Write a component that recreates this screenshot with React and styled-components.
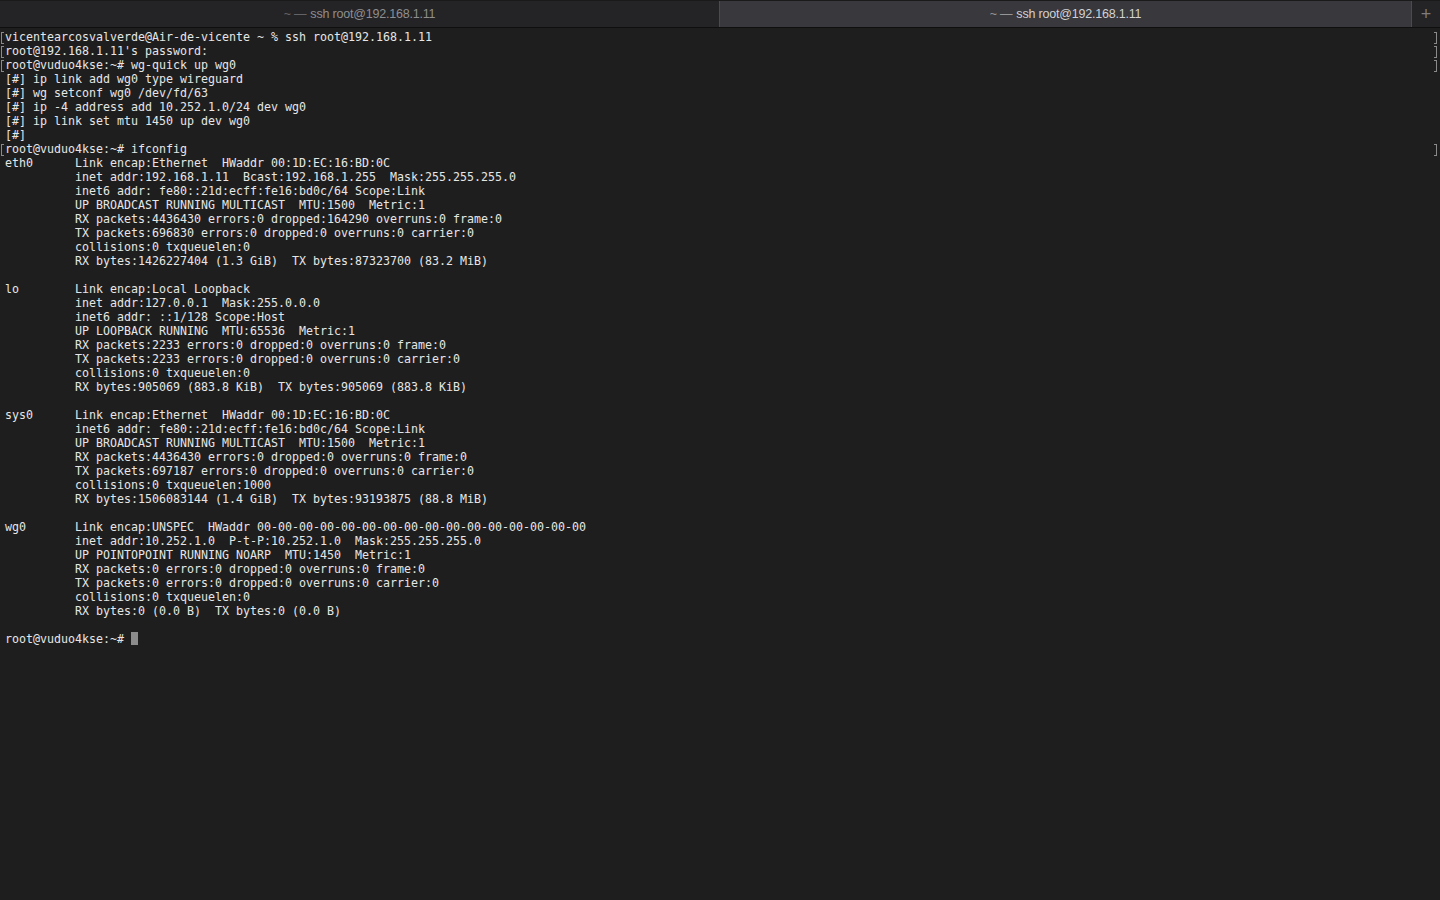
import React from 'react';
import styled, { createGlobalStyle } from 'styled-components';

const GlobalStyle = createGlobalStyle`
  html, body {
    margin: 0;
    padding: 0;
    background: #1e1e1e;
  }
  #root {
    height: 100vh;
  }
`;

const Window = styled.div`
  width: 1440px;
  height: 900px;
  display: flex;
  flex-direction: column;
  background: #1e1e1e;
  overflow: hidden;
`;

const TabBar = styled.div`
  display: flex;
  height: 28px;
  background: #242426;
  border-top: 1px solid #1a1a1a;
  border-bottom: 1px solid #0f0f0f;
  box-sizing: border-box;
`;

const Tab = styled.div`
  flex: ${(p) => (p.$active ? '1' : '0 0 719px')};
  display: flex;
  align-items: center;
  justify-content: center;
  background: ${(p) => (p.$active ? '#39383c' : '#242426')};
  color: ${(p) => (p.$active ? '#d2d2d4' : '#8e8e90')};
  border-left: ${(p) => (p.$active ? '1px solid #4b4b4e' : 'none')};
  font-family: 'Liberation Sans', Arial, sans-serif;
  font-size: 12.5px;
  letter-spacing: -0.2px;
`;

const Dim = styled.span`
  opacity: 0.6;
  margin-right: 4px;
`;

const AddTab = styled.div`
  width: 28px;
  display: flex;
  align-items: center;
  justify-content: center;
  border-left: 1px solid #4b4b4e;
  background: #242426;
  color: #7d7d80;
  font-family: 'Liberation Sans', Arial, sans-serif;
  font-size: 18px;
  font-weight: 300;
`;

const Screen = styled.div`
  flex: 1;
  padding: 2px 0 0 5px;
`;

const Line = styled.div`
  position: relative;
  height: 14px;
  line-height: 14px;
  white-space: pre;
  font-family: 'DejaVu Sans Mono', Menlo, monospace;
  font-size: 11.63px;
  color: #e6e6e6;
`;

const Mark = styled.span`
  position: absolute;
  top: 2px;
  width: 2px;
  height: 10px;
  border: 1px solid #8a8a8a;
  ${(p) => (p.$right ? 'right: 3px; border-left: none;' : 'left: -4px; border-right: none;')}
`;

const Cursor = styled.span`
  display: inline-block;
  width: 7px;
  height: 13px;
  vertical-align: -2px;
  background: #8c8c8c;
`;

const lines = [
  { t: 'vicentearcosvalverde@Air-de-vicente ~ % ssh root@192.168.1.11', m: true },
  { t: "root@192.168.1.11's password:", m: true },
  { t: 'root@vuduo4kse:~# wg-quick up wg0', m: true },
  { t: '[#] ip link add wg0 type wireguard' },
  { t: '[#] wg setconf wg0 /dev/fd/63' },
  { t: '[#] ip -4 address add 10.252.1.0/24 dev wg0' },
  { t: '[#] ip link set mtu 1450 up dev wg0' },
  { t: '[#]' },
  { t: 'root@vuduo4kse:~# ifconfig', m: true },
  { t: 'eth0      Link encap:Ethernet  HWaddr 00:1D:EC:16:BD:0C' },
  { t: '          inet addr:192.168.1.11  Bcast:192.168.1.255  Mask:255.255.255.0' },
  { t: '          inet6 addr: fe80::21d:ecff:fe16:bd0c/64 Scope:Link' },
  { t: '          UP BROADCAST RUNNING MULTICAST  MTU:1500  Metric:1' },
  { t: '          RX packets:4436430 errors:0 dropped:164290 overruns:0 frame:0' },
  { t: '          TX packets:696830 errors:0 dropped:0 overruns:0 carrier:0' },
  { t: '          collisions:0 txqueuelen:0' },
  { t: '          RX bytes:1426227404 (1.3 GiB)  TX bytes:87323700 (83.2 MiB)' },
  { t: '' },
  { t: 'lo        Link encap:Local Loopback' },
  { t: '          inet addr:127.0.0.1  Mask:255.0.0.0' },
  { t: '          inet6 addr: ::1/128 Scope:Host' },
  { t: '          UP LOOPBACK RUNNING  MTU:65536  Metric:1' },
  { t: '          RX packets:2233 errors:0 dropped:0 overruns:0 frame:0' },
  { t: '          TX packets:2233 errors:0 dropped:0 overruns:0 carrier:0' },
  { t: '          collisions:0 txqueuelen:0' },
  { t: '          RX bytes:905069 (883.8 KiB)  TX bytes:905069 (883.8 KiB)' },
  { t: '' },
  { t: 'sys0      Link encap:Ethernet  HWaddr 00:1D:EC:16:BD:0C' },
  { t: '          inet6 addr: fe80::21d:ecff:fe16:bd0c/64 Scope:Link' },
  { t: '          UP BROADCAST RUNNING MULTICAST  MTU:1500  Metric:1' },
  { t: '          RX packets:4436430 errors:0 dropped:0 overruns:0 frame:0' },
  { t: '          TX packets:697187 errors:0 dropped:0 overruns:0 carrier:0' },
  { t: '          collisions:0 txqueuelen:1000' },
  { t: '          RX bytes:1506083144 (1.4 GiB)  TX bytes:93193875 (88.8 MiB)' },
  { t: '' },
  { t: 'wg0       Link encap:UNSPEC  HWaddr 00-00-00-00-00-00-00-00-00-00-00-00-00-00-00-00' },
  { t: '          inet addr:10.252.1.0  P-t-P:10.252.1.0  Mask:255.255.255.0' },
  { t: '          UP POINTOPOINT RUNNING NOARP  MTU:1450  Metric:1' },
  { t: '          RX packets:0 errors:0 dropped:0 overruns:0 frame:0' },
  { t: '          TX packets:0 errors:0 dropped:0 overruns:0 carrier:0' },
  { t: '          collisions:0 txqueuelen:0' },
  { t: '          RX bytes:0 (0.0 B)  TX bytes:0 (0.0 B)' },
  { t: '' },
];

const App = () => {
  return (
    <>
      <GlobalStyle />
      <Window>
        <TabBar>
          <Tab>
            <Dim>~ —</Dim>ssh root@192.168.1.11
          </Tab>
          <Tab $active>
            <Dim>~ —</Dim>ssh root@192.168.1.11
          </Tab>
          <AddTab>+</AddTab>
        </TabBar>
        <Screen>
          {lines.map((l, i) => (
            <Line key={i}>
              {l.m && <Mark />}
              {l.m && <Mark $right />}
              {l.t}
            </Line>
          ))}
          <Line>
            {'root@vuduo4kse:~# '}
            <Cursor />
          </Line>
        </Screen>
      </Window>
    </>
  );
};

export default App;
